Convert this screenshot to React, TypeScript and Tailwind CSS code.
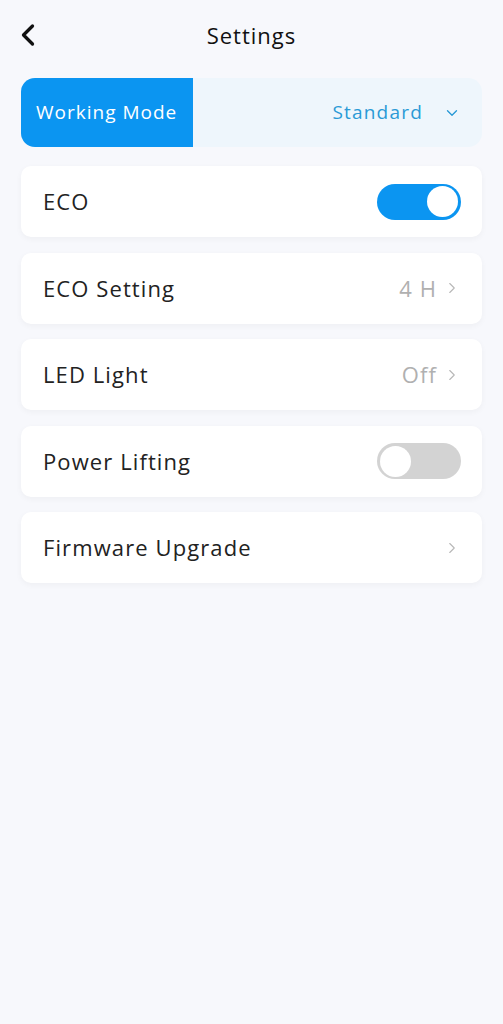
import { ChevronLeft, ChevronRight, ChevronDown } from 'lucide-react';

const font = { fontFamily: '"Open Sans", "Noto Sans", sans-serif' };

function Toggle({ on }: { on: boolean }) {
    return (
        <div className={`w-[84px] h-[36px] rounded-full flex items-center px-[3px] ${on ? 'bg-[#0b95f1] justify-end' : 'bg-[#d3d3d3] justify-start'}`}>
            <div className="w-[31px] h-[31px] rounded-full bg-white" />
        </div>
    );
}

function Row({ label, value, toggle, arrow }: { label: string, value?: string, toggle?: boolean, arrow?: boolean }) {
    return (
        <div className="h-[71px] bg-white rounded-[10px] shadow-[0_2px_6px_rgba(0,0,0,0.04)] flex items-center justify-between pl-[22px] pr-[21px]">
            <span className="text-[22px] text-[#222222] tracking-[1.1px]">{label}</span>
            <div className="flex items-center gap-[6px]">
                {value && <span className="text-[22px] text-[#b0b0b0] tracking-[1.1px]">{value}</span>}
                {arrow && <ChevronRight size={18} strokeWidth={1.5} className="text-[#b8b8b8]" />}
                {toggle !== undefined && <Toggle on={toggle} />}
            </div>
        </div>
    );
}

export default function App() {
    return (
        <div className="w-[503px] min-h-[1024px] bg-[#f7f8fc]" style={font}>
            <div className="relative h-[72px] flex items-center justify-center">
                <ChevronLeft size={36} strokeWidth={2.2} className="absolute left-[10px] top-[17px] text-[#111111]" />
                <span className="text-[22px] text-[#111111] font-medium tracking-[1px] -mt-[2px]">Settings</span>
            </div>
            <div className="px-[21px] pt-[6px] flex flex-col gap-[15.5px]">
                <div className="h-[69px] flex rounded-[14px] overflow-hidden bg-[#eef6fc] mb-[3.5px]">
                    <div className="w-[172px] bg-[#0b95f1] flex items-center pl-[15px]">
                        <span className="text-[19px] text-white tracking-[1px]">Working Mode</span>
                    </div>
                    <div className="flex-1 flex items-center justify-end pr-[21px] gap-[20px]">
                        <span className="text-[19px] text-[#2a9ad6] tracking-[1.2px]">Standard</span>
                        <ChevronDown size={18} strokeWidth={1.8} className="text-[#2a9ad6]" />
                    </div>
                </div>
                <Row label="ECO" toggle={true} />
                <Row label="ECO Setting" value="4 H" arrow />
                <Row label="LED Light" value="Off" arrow />
                <Row label="Power Lifting" toggle={false} />
                <Row label="Firmware Upgrade" arrow />
            </div>
        </div>
    );
}
